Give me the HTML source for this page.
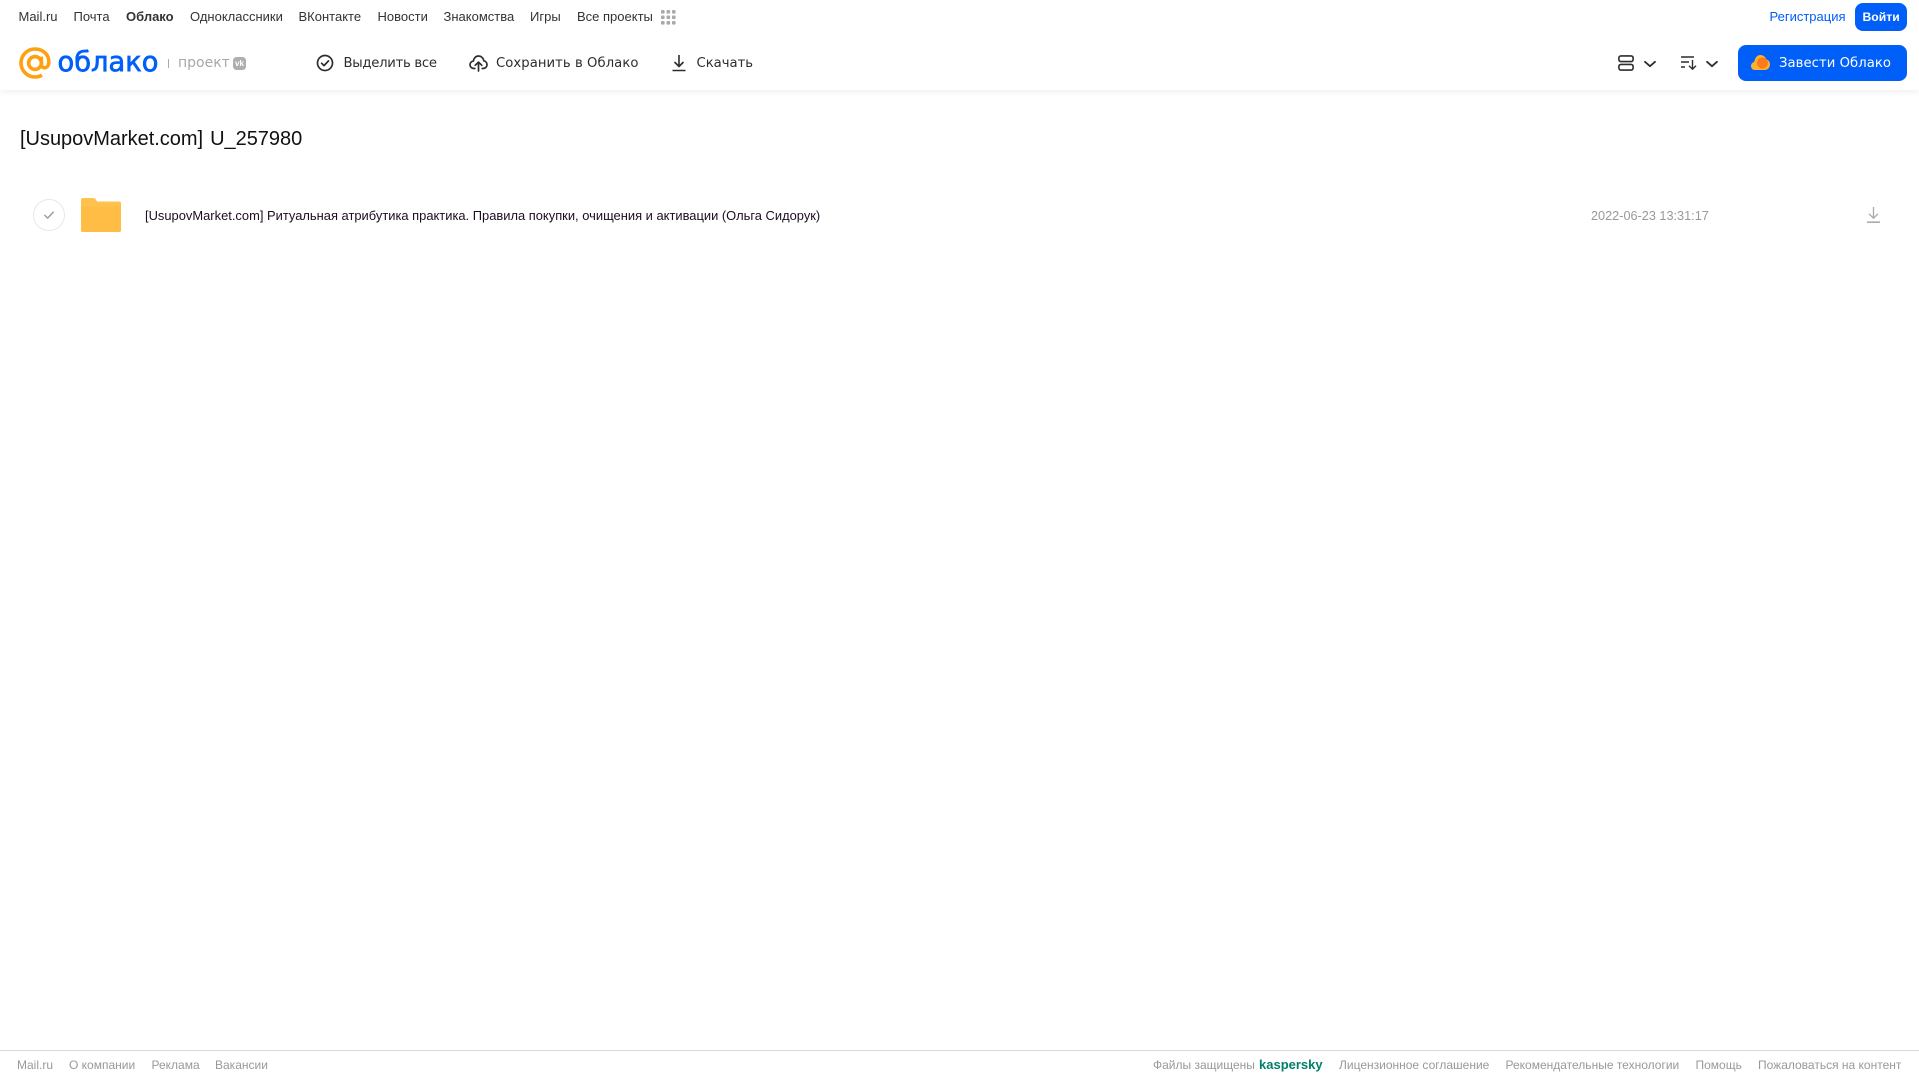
<!DOCTYPE html>
<html lang="ru"><head><meta charset="utf-8"><title>Облако</title>
<style>
html,body{margin:0;padding:0;width:1919px;height:1079px;overflow:hidden;background:#fff;font-family:"Liberation Sans",sans-serif}
.t{position:absolute;white-space:nowrap;line-height:20px}
.n{top:6.5px;font-size:13px;color:#333}
.b{top:54px;color:#2c2d2e;font-family:"DejaVu Sans",sans-serif;font-size:13.2px}
.f{top:1055px;font-size:12px;color:#999}
svg{position:absolute;overflow:visible}
#hd{position:absolute;left:0;top:0;width:1919px;height:90px;background:#fff;box-shadow:0 1px 8px rgba(0,0,0,.08)}
</style></head><body>
<div id="hd"></div>
<span class="t n" style="left:18.5px">Mail.ru</span>
<span class="t n" style="left:73.5px">Почта</span>
<span class="t n" style="left:126px;font-weight:700">Облако</span>
<span class="t n" style="left:190px">Одноклассники</span>
<span class="t n" style="left:298.5px">ВКонтакте</span>
<span class="t n" style="left:377.5px">Новости</span>
<span class="t n" style="left:443.5px">Знакомства</span>
<span class="t n" style="left:530px">Игры</span>
<span class="t n" style="left:577px">Все проекты</span>
<svg style="left:661px;top:10px" width="15" height="15" fill="#aaa"><rect x="0" y="0" width="3.6" height="3.6" rx="1"/><rect x="5.5" y="0" width="3.6" height="3.6" rx="1"/><rect x="11" y="0" width="3.6" height="3.6" rx="1"/><rect x="0" y="5.5" width="3.6" height="3.6" rx="1"/><rect x="5.5" y="5.5" width="3.6" height="3.6" rx="1"/><rect x="11" y="5.5" width="3.6" height="3.6" rx="1"/><rect x="0" y="11" width="3.6" height="3.6" rx="1"/><rect x="5.5" y="11" width="3.6" height="3.6" rx="1"/><rect x="11" y="11" width="3.6" height="3.6" rx="1"/></svg>
<span class="t n" style="left:1769.500px;color:#005ff9">Регистрация</span>
<div style="position:absolute;left:1855px;top:3px;width:52px;height:28px;border-radius:8px;background:#005ff9"></div>
<span class="t n" style="left:1862.500px;color:#fff;font-weight:700;font-size:12.200px">Войти</span>

<svg style="left:19px;top:47px" width="33" height="32" viewBox="0 0 33 32" fill="none" stroke="#ffa010" stroke-width="3.600"><circle cx="16" cy="16" r="6.400"/><path d="M22.400 9.600V17.500c0 4.600 6.800 4.600 7.400-1.500C30.400 7.600 24 2 16 2 8.300 2 2 8.300 2 16s6.300 14 14 14c2.800 0 5-.6 7-1.800"/></svg>
<span class="t" style="left:57.500px;top:47px;line-height:32px;font-family:'DejaVu Sans',sans-serif;font-size:27.300px;color:#005ff9;-webkit-text-stroke:.7px #005ff9">облако</span>
<div style="position:absolute;left:168px;top:59px;width:1px;height:9px;background:#aaa"></div>
<span class="t" style="left:178px;top:53px;font-family:'DejaVu Sans',sans-serif;font-size:14px;color:#a8a8a8">проект</span>
<div style="position:absolute;left:233px;top:57px;width:13px;height:13px;border-radius:3.500px;background:#aeaeae;color:#fff;font-size:8px;font-weight:700;line-height:13px;text-align:center">vk</div>

<svg style="left:316px;top:54px" width="18" height="18" fill="none" stroke="#2c2d2e" stroke-width="1.700"><circle cx="9" cy="9" r="7.500"/><path d="M5.600 9.300l2.400 2.300 4.500-4.700" stroke-linecap="round" stroke-linejoin="round"/></svg>
<span class="t b" style="left:343.500px;letter-spacing:-.27px">Выделить все</span>
<svg style="left:469px;top:54px" width="19" height="18" viewBox="0 0 19 18" fill="none" stroke="#2c2d2e" stroke-width="1.700" stroke-linecap="round" stroke-linejoin="round"><path d="M5.800 14.500H5C2.600 14.500 1 12.800 1 10.800c0-1.900 1.400-3.500 3.300-3.700C4.800 4.100 7 2 9.600 2c2.600 0 4.800 2 5.200 4.800 1.900.3 3.200 2 3.200 3.900 0 2.100-1.600 3.800-4 3.800h-.8"/><path d="M9.500 17V8.500M6.200 11.300l3.300-3.200 3.300 3.200"/></svg>
<span class="t b" style="left:496px;letter-spacing:.06px">Сохранить в Облако</span>
<svg style="left:672px;top:54px" width="14" height="18" fill="none" stroke="#2c2d2e" stroke-width="1.600"><path d="M7 1v11M2.500 8l4.500 4.500L11.500 8M.5 16.500h13"/></svg>
<span class="t b" style="left:696.500px">Скачать</span>

<svg style="left:1618px;top:55px" width="16" height="16" fill="none" stroke="#2c2d2e" stroke-width="1.600"><rect x=".9" y=".9" width="14.200" height="5.700" rx="2"/><rect x=".9" y="9.400" width="14.200" height="5.700" rx="2"/></svg>
<svg style="left:1644px;top:60.500px" width="12" height="6" fill="none" stroke="#2c2d2e" stroke-width="1.800" stroke-linecap="round" stroke-linejoin="round"><path d="M1 .8l5 4.400 5-4.400"/></svg>
<svg style="left:1681px;top:56px" width="16" height="14" fill="none" stroke="#2c2d2e" stroke-width="1.400"><path d="M0 1h13M0 6h8M0 11h4M11.500 4v9M8 9.800l3.500 3.400L15 9.800"/></svg>
<svg style="left:1706px;top:60.500px" width="12" height="6" fill="none" stroke="#2c2d2e" stroke-width="1.800" stroke-linecap="round" stroke-linejoin="round"><path d="M1 .8l5 4.400 5-4.400"/></svg>
<div style="position:absolute;left:1738px;top:45px;width:169px;height:36px;border-radius:8px;background:#005ff9"></div>
<svg style="left:1750.500px;top:55px" width="19" height="15" viewBox="0 0 19 15"><path d="M4 15C1.800 15 0 13.300 0 11c0-2 1.400-3.700 3.300-4C3.700 3 6.200 0 9.500 0c2.700 0 5 1.800 5.800 4.400 2.100.4 3.700 2.400 3.700 5C19 12.600 16.700 15 14 15z" fill="#ffb02e"/><circle cx="11.500" cy="8" r="5.500" fill="#ff7a1a"/></svg>
<span class="t b" style="left:1779px;color:#fff;letter-spacing:.06px">Завести Облако</span>

<span class="t" style="left:20px;top:127px;line-height:24px;font-size:20px;word-spacing:1.500px;letter-spacing:-.02px;color:#111">[UsupovMarket.com] U_257980</span>

<svg style="left:33px;top:199px" width="32" height="32" fill="none"><circle cx="16" cy="16" r="15.500" stroke="#e7e8ea"/><path d="M11.800 16.300l2.900 2.800 5.600-6" stroke="#999" stroke-width="1.400" stroke-linecap="round" stroke-linejoin="round"/></svg>
<svg style="left:81px;top:198px" width="40" height="34" viewBox="0 0 40 34"><path d="M2 0h10c1.500 0 2.200.6 3 1.600L16 3.500h22a2 2 0 012 2V32a2 2 0 01-2 2H2a2 2 0 01-2-2V2a2 2 0 012-2z" fill="#ffc24f"/><path d="M0 8.500h40V32a2 2 0 01-2 2H2a2 2 0 01-2-2z" fill="#ffbd45"/></svg>
<span class="t" style="left:145px;top:206px;font-size:12.900px;letter-spacing:.012px;color:#1d0d22">[UsupovMarket.com] Ритуальная атрибутика практика. Правила покупки, очищения и активации (Ольга Сидорук)</span>
<span class="t" style="left:1591px;top:206px;font-size:12.700px;color:#999">2022-06-23 13:31:17</span>
<svg style="left:1867px;top:207px" width="13" height="16" fill="none" stroke="#aaa" stroke-width="1.300"><path d="M6.500 0v11M2 6.800l4.500 4.400L11 6.800"/><path d="M0 15.200h13" stroke-width="1.600"/></svg>

<div style="position:absolute;left:0;top:1050px;width:1919px;height:1px;background:#d8d8d8"></div>
<span class="t f" style="left:17px">Mail.ru</span>
<span class="t f" style="left:69px">О компании</span>
<span class="t f" style="left:151.500px">Реклама</span>
<span class="t f" style="left:215px">Вакансии</span>
<span class="t f" style="left:1153px">Файлы защищены</span>
<span class="t f" style="left:1259px;color:#00806a;font-weight:700;font-size:13px">kaspersky</span>
<span class="t f" style="left:1339px">Лицензионное соглашение</span>
<span class="t f" style="left:1505.500px">Рекомендательные технологии</span>
<span class="t f" style="left:1695.500px">Помощь</span>
<span class="t f" style="left:1758px">Пожаловаться на контент</span>
</body></html>
